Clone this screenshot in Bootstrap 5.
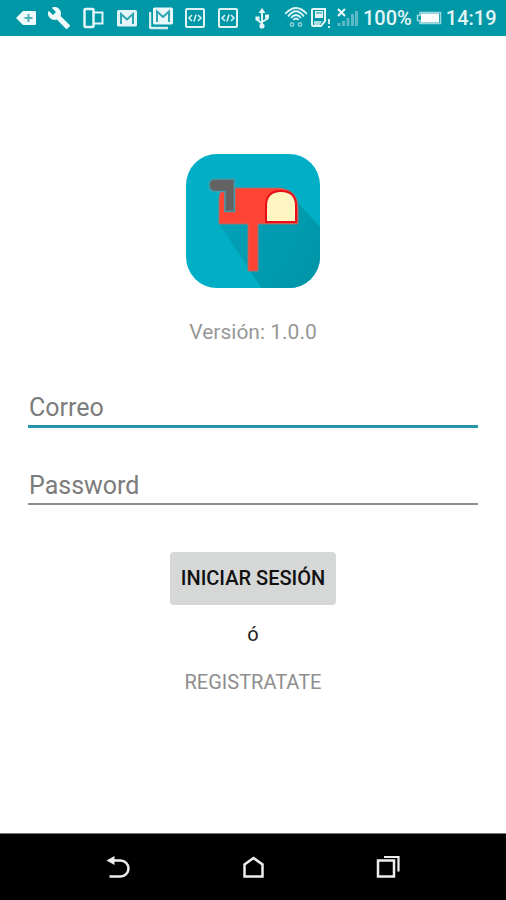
<!DOCTYPE html>
<html lang="es">
<head>
<meta charset="utf-8">
<meta name="viewport" content="width=device-width, initial-scale=1">
<title>Iniciar sesión</title>
<link href="https://cdn.jsdelivr.net/npm/bootstrap@5.3.0/dist/css/bootstrap.min.css" rel="stylesheet">
<style>
  body { font-family: Roboto, "Liberation Sans", sans-serif; background: #fff; }
  svg { display: block; flex-shrink: 0; }
  .status-bar { background: #0097a7; color: #e4f5f6; font-size: 20px; line-height: 24px; padding: 6px 11px 6px 13px; }
  .status-text { font-weight: 500; }
  .status-icons { gap: 10px; }
  .status-info { gap: 4px; }
  .login { padding: 117px 28px 40px; }
  .version { font-size: 21px; line-height: 24px; color: #979797; margin: 31px 0 43px; }
  .line-input, .line-input:focus {
    border: 0; border-bottom: 2px solid #8c8c8c; border-radius: 0; background: transparent; box-shadow: none;
    font-size: 25px; line-height: 32px; padding: 5px 1px 1px; color: #333;
  }
  .line-input::placeholder { color: #7c7c7c; opacity: 1; }
  .line-input.current { border-bottom: 3px solid #2795aa; }
  .fields { gap: 37px; }
  .btn-login, .btn-login:hover {
    --bs-btn-padding-x: 11px; --bs-btn-padding-y: 14px; --bs-btn-border-width: 0; --bs-btn-border-radius: 4px;
    background: #d6d7d7; color: #111; font-size: 20px; line-height: 25px; font-weight: 500; margin-top: 47px;
  }
  .or-text { font-size: 20px; line-height: 24px; color: #222; margin: 17px 0 24px; }
  .register { font-size: 20px; line-height: 24px; color: #8e8e8e; }
  .nav-keys { background: #000; height: 67px; border-top: 1px solid #777; padding: 0 51px; }
  .nav-keys button { flex: 1; }
</style>
<script src="https://cdn.jsdelivr.net/npm/bootstrap@5.3.0/dist/js/bootstrap.bundle.min.js"></script>
</head>
<body class="d-flex flex-column min-vh-100">

<header class="status-bar d-flex align-items-center justify-content-between">
  <div class="status-icons d-flex align-items-center">
    <svg width="24" height="24" viewBox="0 0 24 24"><path d="M3 12 10 5H22Q23 5 23 6V18Q23 19 22 19H10Z" fill="#f0fafa"/><path d="M15.500 8v8M11.500 12h8" stroke="#4fb3be" stroke-width="2"/></svg>
    <svg width="24" height="24" viewBox="0 0 24 24"><path d="M22.700 19l-9.100-9.100c.9-2.300.4-5-1.500-6.900-2-2-5-2.400-7.400-1.300L9 6 6 9 1.600 4.700C.4 7.100.9 10.100 2.900 12.100c1.900 1.900 4.600 2.400 6.900 1.500l9.100 9.100c.4.400 1 .4 1.400 0l2.300-2.300c.5-.4.5-1.100.1-1.400z" fill="#f0fafa"/></svg>
    <svg width="24" height="24" viewBox="0 0 24 24" fill="none" stroke="#e3f5f6" stroke-width="2"><rect x="3.500" y="3" width="9" height="18" rx="1" stroke-width="2.500"/><path d="M13 6.500h8.500v11H13"/></svg>
    <svg width="24" height="24" viewBox="0 0 24 24"><rect x="2" y="4" width="20" height="16.500" rx="1.500" fill="#e3f5f6"/><path d="M6 18V8l6 5.500L18 8v10" fill="none" stroke="#2ea5b2" stroke-width="2"/></svg>
    <svg width="24" height="24" viewBox="0 0 24 24"><path d="M1 6v14.500q0 1.500 1.500 1.500H19" fill="none" stroke="#d5eff1" stroke-width="2.500"/><rect x="4" y="1.500" width="20" height="17" rx="1.500" fill="#e8f7f8"/><path d="M8 16V5.500l6 5.500 6-5.500V16" fill="none" stroke="#2ea5b2" stroke-width="2"/></svg>
    <svg width="24" height="24" viewBox="0 0 24 24" fill="none" stroke="#dff3f5" stroke-width="2"><rect x="3" y="3" width="18" height="18" rx="1"/><path d="M9 9l-3 3 3 3M15 9l3 3-3 3M13 8.500l-2 7" stroke-width="1.500"/></svg>
    <svg width="24" height="24" viewBox="0 0 24 24" fill="none" stroke="#dff3f5" stroke-width="2"><rect x="2" y="3" width="18" height="18" rx="1"/><path d="M8 9l-3 3 3 3M14 9l3 3-3 3M12 8.500l-2 7" stroke-width="1.500"/></svg>
    <svg width="24" height="24" viewBox="0 0 24 24" fill="#e3f5f6"><path d="M11 2l3.500 5h-7zM4.500 10.500h4v4h-4zM14 8.500h4v4h-4z"/><circle cx="11" cy="20" r="2.600"/><path d="M11 5v15M6.500 13v1l4.500 3.500M16 11v2l-5 3" fill="none" stroke="#e3f5f6" stroke-width="2"/></svg>
    <svg width="24" height="24" viewBox="0 0 24 24" fill="none" stroke="#e3f5f6" stroke-width="1.800"><path d="M0 8Q11-4 22 8M3 10.500Q11 0 19 10.500M6 12q5-6 10 0M8.500 14q2.500-3 5 0"/><circle cx="7" cy="18.500" r="1.700" stroke="#8ccfd6" stroke-width="1.500"/><circle cx="15" cy="18.500" r="1.700" stroke="#8ccfd6" stroke-width="1.500"/></svg>
  </div>
  <div class="status-info d-flex align-items-center">
    <svg width="22" height="24" viewBox="0 0 22 24"><path d="M4 3h12v12l-4 5H4q-1 0-1-1V4q0-1 1-1z" fill="none" stroke="#e3f5f6" stroke-width="2"/><path d="M6 5h8v7H6z" fill="#e3f5f6"/><path d="M7 7h6" stroke="#0097a7"/><path d="M5 15h8l-2 4H5z" fill="#a8dce1"/><path d="M20 13v5M20 20v2" stroke="#e3f5f6" stroke-width="1.800"/></svg>
    <svg width="24" height="24" viewBox="0 0 24 24"><path d="M3 3l7 7M10 3l-7 7" stroke="#f0fafa" stroke-width="2"/><path d="M4 20v-3M8.500 20v-5M13 20v-8M17.500 20V8M21.500 20V5" stroke="#5cbac4" stroke-width="3"/></svg>
    <span class="status-text">100%</span>
    <svg width="26" height="24" viewBox="0 0 26 24"><path d="M4 6.500h20.500v11H4v-3H1.500v-5H4z" fill="none" stroke="#9ed8de" stroke-width="1.500"/><path d="M5 7.500h18v9H5z" fill="#fff"/></svg>
    <time class="status-text">14:19</time>
  </div>
</header>

<main class="login flex-grow-1">
  <form class="d-flex flex-column align-items-center">
    <svg width="136" height="136" viewBox="-1 0 136 136" role="img" aria-label="Buzón">
      <defs>
        <clipPath id="tile"><rect x="0" y="1" width="134" height="134" rx="31"/></clipPath>
        <linearGradient id="shade" x1="0" y1="0" x2="1" y2="0.500"><stop offset="0" stop-color="#02a2b8"/><stop offset="1" stop-color="#0096aa"/></linearGradient>
      </defs>
      <g clip-path="url(#tile)">
        <path d="M0 0h136v136H0z" fill="#00afc5"/>
        <path d="M34 72 76 136H136V76L111 49Z" fill="url(#shade)"/>
      </g>
      <path d="M33 71V46q0-11 11-11h50q18 2 18 20v16H72v47H62V71z" fill="#ff4433" stroke="#9d7778" stroke-width="1"/>
      <path d="M80 69V53q0-15 15-15t15 15v16z" fill="#fff5c3" stroke="#e80f18" stroke-width="2"/>
      <path d="M27.500 26H48.500V58.500H39V38.500H27.500Q23 37 23 32T27.500 26z" fill="#636363" stroke="#3f9fae" stroke-width="1.500"/>
    </svg>
    <p class="version">Versión: 1.0.0</p>
    <div class="fields d-flex flex-column w-100">
      <input class="form-control line-input current" type="email" placeholder="Correo" aria-label="Correo">
      <input class="form-control line-input" type="password" placeholder="Password" aria-label="Password">
    </div>
    <button type="button" class="btn btn-login">INICIAR SESIÓN</button>
    <p class="or-text">ó</p>
    <a href="#" class="register text-decoration-none">REGISTRATATE</a>
  </form>
</main>

<footer class="nav-keys d-flex align-items-center">
  <button type="button" class="btn p-0 border-0 d-flex justify-content-center" aria-label="Atrás">
    <svg width="26" height="26" viewBox="0 0 26 26"><path d="M6 6.500h9.500a8 8 0 0 1 0 16H4.500" fill="none" stroke="#eee" stroke-width="2.500"/><path d="M1.500 6.500 9.500 2v9z" fill="#eee"/></svg>
  </button>
  <button type="button" class="btn p-0 border-0 d-flex justify-content-center" aria-label="Inicio">
    <svg width="26" height="26" viewBox="0 0 26 26"><path d="M4.500 10.500 13.500 4l9 6.500V22.500h-18z" fill="none" stroke="#eee" stroke-width="2.500"/></svg>
  </button>
  <button type="button" class="btn p-0 border-0 d-flex justify-content-center" aria-label="Recientes">
    <svg width="26" height="26" viewBox="0 0 26 26" fill="none" stroke="#eee" stroke-width="2.500"><path d="M3 6.500h16v16H3z"/><path d="M9 3h14.500v14.500" stroke-width="2.200"/></svg>
  </button>
</footer>
</body>
</html>
